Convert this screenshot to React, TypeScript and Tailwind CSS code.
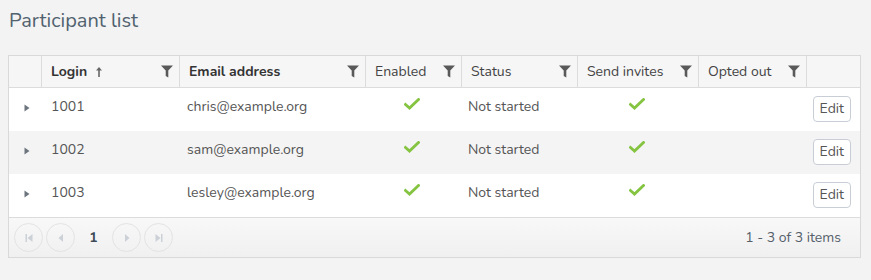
import React from "react";

const font = { fontFamily: "Nunito, Lato, 'Open Sans', sans-serif" };

function Filter() {
  return (
    <svg width="12" height="13" viewBox="0 0 12 13" className="shrink-0">
      <path d="M0 0.5h12L7.3 5.5V12.5L4.7 11V5.5Z" fill="#595959" />
    </svg>
  );
}

function Check() {
  return (
    <svg width="16" height="12" viewBox="0 0 16 12">
      <path d="M1.5 6.5L5.5 10L14.5 1.5" stroke="#85c441" strokeWidth="2.8" fill="none" strokeLinecap="square" />
    </svg>
  );
}

function Caret() {
  return (
    <svg width="6" height="8" viewBox="0 0 6 8">
      <path d="M0.5 0.5L5.5 4L0.5 7.5Z" fill="#6c757d" />
    </svg>
  );
}

function PagerBtn({ d }: { d: React.ReactNode }) {
  return (
    <div className="w-[29px] h-[29px] rounded-full border border-[#e3e3e3] flex items-center justify-center">
      <svg width="10" height="10" viewBox="0 0 10 10">{d}</svg>
    </div>
  );
}

const cols = "grid grid-cols-[33px_138px_186px_96px_116px_121px_108px_1fr]";

function HeadCell({ children, bold, filter = true, last }: { children?: React.ReactNode; bold?: boolean; filter?: boolean; last?: boolean }) {
  return (
    <div className={`flex items-center justify-between pl-[9px] pr-[6px] ${last ? "" : "border-r border-[#dcdcdc]"} ${bold ? "font-bold text-[#333]" : "text-[#444]"}`}>
      <div className="flex items-center">{children}</div>
      {filter && <Filter />}
    </div>
  );
}

const rows = [
  { id: "1001", email: "chris@example.org", bg: "bg-white" },
  { id: "1002", email: "sam@example.org", bg: "bg-[#f4f4f4]" },
  { id: "1003", email: "lesley@example.org", bg: "bg-white" },
];

export default function App() {
  return (
    <div className="w-[871px] h-[280px] bg-[#f3f3f3] pt-[8px] px-[8px] text-[14px]" style={font}>
      <h1 className="text-[20px] leading-[26px] text-[#51626f] pl-[1px]">Participant list</h1>
      <div className="mt-[21px] w-[853px] border border-[#d9d9d9] bg-white">
        <div className={`${cols} h-[32px] bg-[#f6f6f6] border-b border-[#dcdcdc]`}>
          <div className="border-r border-[#dcdcdc]" />
          <HeadCell bold>
            Login
            <svg width="6" height="10" viewBox="0 0 6 10" className="ml-[9px]">
              <path d="M3 0L6 3.5H3.8V10H2.2V3.5H0Z" fill="#666" />
            </svg>
          </HeadCell>
          <HeadCell bold>Email address</HeadCell>
          <HeadCell>Enabled</HeadCell>
          <HeadCell>Status</HeadCell>
          <HeadCell>Send invites</HeadCell>
          <HeadCell>Opted out</HeadCell>
          <div />
        </div>
        {rows.map((r) => (
          <div key={r.id} className={`${cols} h-[43px] items-center text-[#555] ${r.bg}`}>
            <div className="flex justify-center pl-[2px] pb-[4px]"><Caret /></div>
            <div className="pl-[9px] pb-[6px]">{r.id}</div>
            <div className="pl-[7px] pb-[6px]">{r.email}</div>
            <div className="flex justify-center pb-[12px] pr-[5px]"><Check /></div>
            <div className="pl-[6px] pb-[6px]">Not started</div>
            <div className="flex justify-center pb-[12px] pr-[4px]"><Check /></div>
            <div />
            <div className="flex justify-end pr-[9px] pb-[2px]">
              <button className="h-[26px] px-[6px] rounded-[4px] border border-[#c9ced6] bg-white text-[#555] text-[14px] leading-none" style={font}>Edit</button>
            </div>
          </div>
        ))}
        <div className="h-[40px] border-t border-[#dcdcdc] bg-gradient-to-b from-[#f8f8f8] to-[#f0f0f0] flex items-center justify-between pl-[5px] pr-[19px]">
          <div className="flex items-center gap-[3px]">
            <PagerBtn d={<><rect x="1.5" y="1" width="1.5" height="8" fill="#ccd1d8" /><path d="M8.5 1L3.5 5L8.5 9Z" fill="#ccd1d8" /></>} />
            <PagerBtn d={<path d="M7 1L2.5 5L7 9Z" fill="#ccd1d8" />} />
            <div className="w-[31px] text-center font-bold text-[#3d4a57] text-[14px]">1</div>
            <PagerBtn d={<path d="M3 1L7.5 5L3 9Z" fill="#ccd1d8" />} />
            <PagerBtn d={<><path d="M1.5 1L6.5 5L1.5 9Z" fill="#ccd1d8" /><rect x="7" y="1" width="1.5" height="8" fill="#ccd1d8" /></>} />
          </div>
          <div className="text-[#55606b] text-[14px]">1 - 3 of 3 items</div>
        </div>
      </div>
    </div>
  );
}
